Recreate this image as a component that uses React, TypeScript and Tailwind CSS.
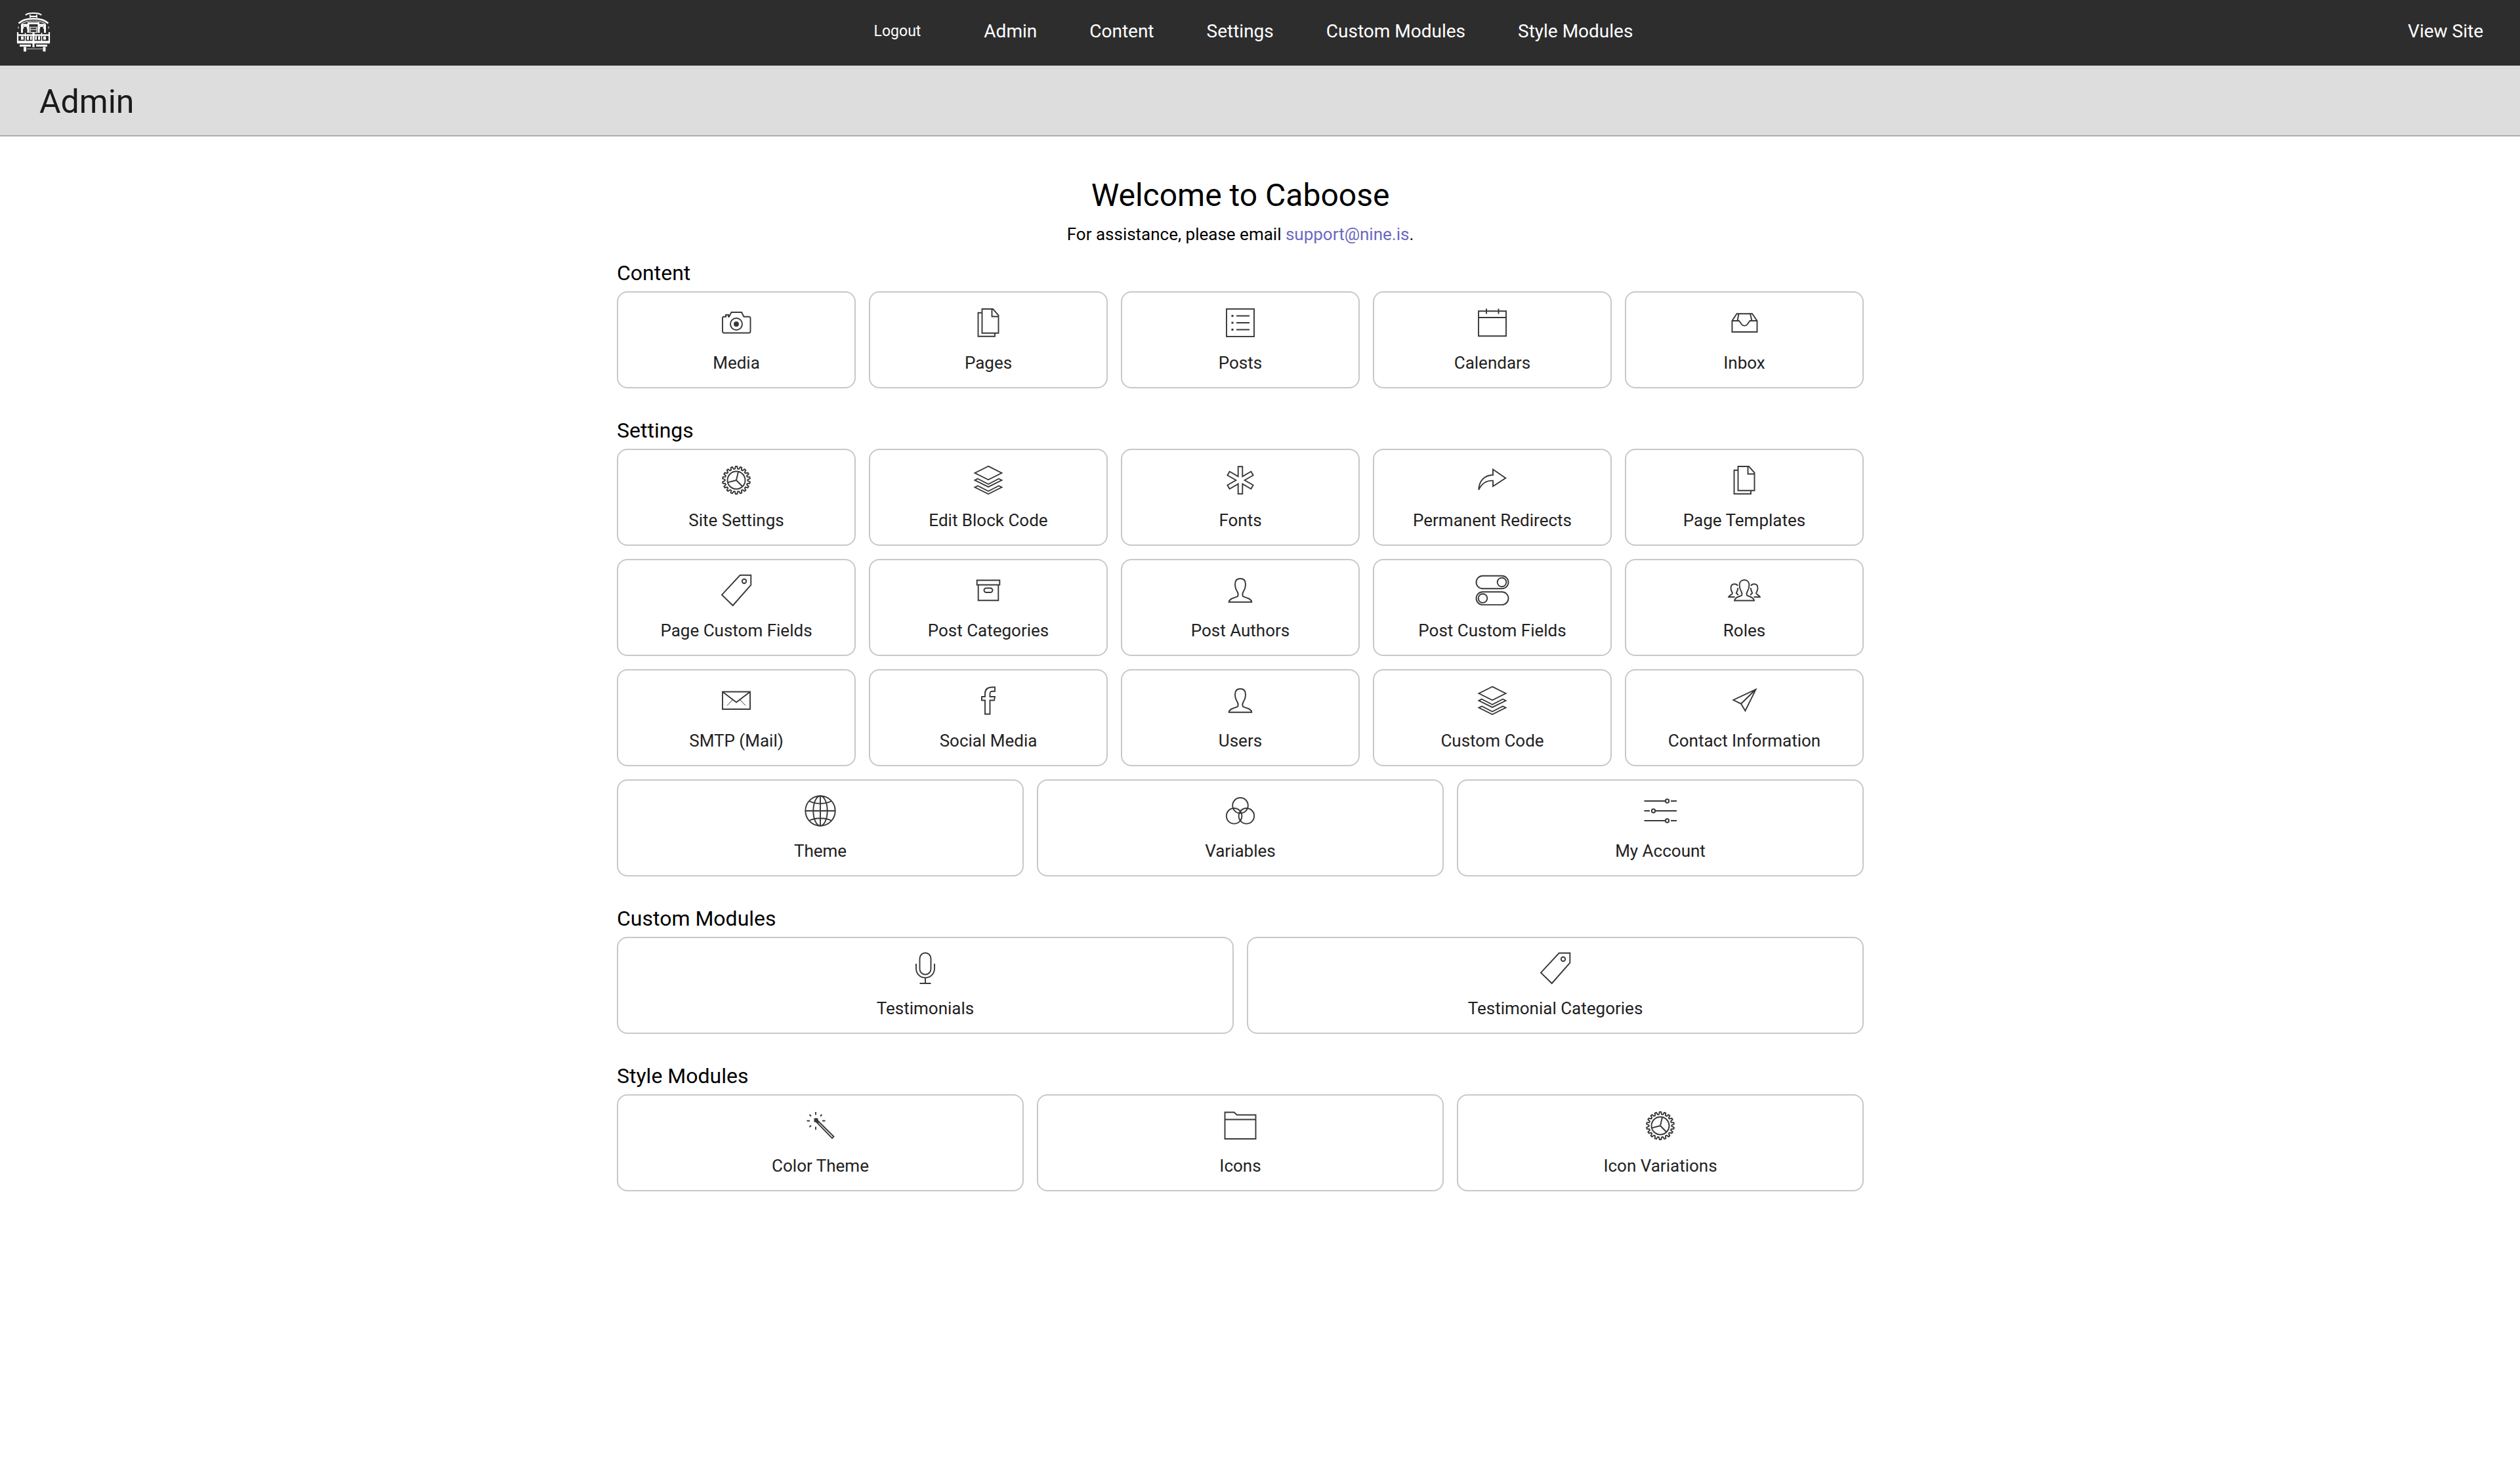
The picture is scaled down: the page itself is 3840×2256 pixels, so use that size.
import type { ReactNode } from "react";

const polar = (radius: number, degrees: number) => {
  const a = (degrees * Math.PI) / 180;
  return `${(24 + radius * Math.cos(a)).toFixed(2)} ${(24 + radius * Math.sin(a)).toFixed(2)}`;
};

const TEETH = 18;
const gearPath =
  "M" +
  Array.from({ length: TEETH }, (_, i) => {
    const a = (i * 360) / TEETH - 90;
    return [polar(17.4, a - 7), polar(21, a - 3.2), polar(21, a + 3.2), polar(17.4, a + 7)].join("L");
  }).join("L") +
  "Z";

const asteriskPath =
  "M" +
  Array.from({ length: 6 }, (_, i) => {
    const a = i * 60 - 90;
    return [polar(21, a - 9), polar(21, a + 9), polar(6.6, a + 30)].join("L");
  }).join("L") +
  "Z";

const gear = (
  <>
    <path d={gearPath} />
    <circle cx="24" cy="24" r="13.5" />
    <path d="M24 24 27 11M24 24 11 27.3M24 24l9.3 9.5" />
  </>
);

const layers = (
  <path d="M24 2.7 44.5 13 24 23.3 3.5 13ZM8 21.7 3.5 24 24 34.2 44.5 24 40 21.7 24 30ZM8 32.5 3.5 34.8 24 45 44.5 34.8 40 32.5 24 40.8Z" />
);

const pages = (
  <path d="M14.5 3H31l8.5 9.5V39.7h-25ZM29.5 3v11.5h10M14.5 8.7h-6v36H34v-5" />
);

const tag = (
  <>
    <path d="M29.7.8H46.3V15.7L18.7 47 2 30.7Z" />
    <circle cx="36" cy="10" r="3.2" />
  </>
);

const user = (
  <path d="M24 6C18.5 6 16 9.5 16 14.5c0 5.500 1.500 8.500 3.500 11.500 1.500 3 1.500 5 .5 7C16 35.500 7.500 35.500 6.700 41.700H41.300C40.500 35.500 32 35.500 28 33c-1-2-1-4 .5-7 2-3 3.500-6 3.500-11.500C32 9.500 29.500 6 24 6Z" />
);

const icons: Record<string, ReactNode> = {
  camera: (
    <>
      <path d="M5 14.700H8V12h4v2.700h1L16.500 8H32l3.500 6.700H43a2.500 2.500 0 0 1 2.500 2.500V37A2.500 2.500 0 0 1 43 39.500H5.500A2.500 2.500 0 0 1 3 37V17A2.300 2.300 0 0 1 5 14.700Z" />
      <circle cx="24" cy="26" r="9" />
      <circle cx="24" cy="26" r="3" fill="currentColor" />
    </>
  ),
  pages,
  list: (
    <>
      <rect x="3" y="3" width="42" height="42" />
      <path d="M18 13.500H38M18 24H38M18 34.500H38" />
      <path d="M10.500 13.500h3M10.500 24h3M10.500 34.500h3" strokeWidth="3" />
    </>
  ),
  calendar: <path d="M3 6.300H45V44.300H3ZM3 16H45M15 2.500v8M33.500 2.500v8" />,
  inbox: (
    <path d="M5.400 21 12.500 10.300H36L43.500 21V38H5.400ZM5.400 21H16L20 26.500C22 29.300 26.500 29.300 28.500 26.500L32.500 21h11M15.500 10.500 13.500 21M33 10.500 35.500 21" />
  ),
  gear,
  layers,
  asterisk: <path d={asteriskPath} />,
  share: <path d="M3.300 38.700C3.500 25 12 16.500 25 16V7.500L44.300 20.800 25 33.300V24.700C16 24.300 8 28.500 3.300 38.700Z" />,
  tag,
  archive: (
    <>
      <path d="M6.700 8.500H41.300v7H6.700ZM8.700 15.500V39.300H39.300V15.500" />
      <rect x="17.500" y="20.500" width="13" height="6.500" rx="3.200" />
    </>
  ),
  user,
  toggles: (
    <>
      <rect x="-.5" y="1.700" width="49" height="19.600" rx="9.800" />
      <circle cx="38.500" cy="11.500" r="6.800" />
      <rect x="-.5" y="26.300" width="49" height="19.600" rx="9.800" />
      <circle cx="9.500" cy="36" r="6.800" />
    </>
  ),
  group: (
    <>
      <path d="M24 8c-5 0-7.400 3.500-7.400 8 0 5 1.400 7.500 2.900 10 1.300 2.500 1.300 4 .5 5.500C16 34 10 33.500 9 39.500H39C38 33.500 32 34 28 31.500c-.8-1.500-.8-3 .5-5.500 1.500-2.500 2.900-5 2.900-10 0-4.500-2.400-8-7.400-8Z" />
      <path d="M13.800 17c-.8-2-2.600-2.700-4.800-2.700-4 0-5.500 2.700-5.500 6.200s1.500 5.500 2.500 7.500c.5 2-4 2.500-5.800 6H9.500M14.300 20c0 3-1.200 5.500-2.500 8l3 3" />
      <path d="M34.200 17c.8-2 2.600-2.700 4.800-2.700 4 0 5.500 2.700 5.500 6.200s-1.500 5.500-2.500 7.500c-.5 2 4 2.500 5.800 6H38.500M33.700 20c0 3 1.200 5.500 2.500 8l-3 3" />
    </>
  ),
  mail: (
    <>
      <path d="M3 10.500H45V37H3Z" />
      <path d="M3 10.500 24 26.500 45 10.500" />
      <path d="M18.500 22.500 10 31.500M29.500 22.500 38 31.500" strokeWidth="1" />
    </>
  ),
  facebook: (
    <path d="M34 3.500H30.500C22 3.500 19 7 19 13v5H14v5.500h5v21h7.500v-21H33L34 18H26.500V13.500c0-3 1-3.800 4-3.800H34Z" />
  ),
  plane: <path d="M41.600 6.800 7.300 23 19 28.800 25.400 39.500ZM19 28.800 41.600 6.800" />,
  globe: (
    <>
      <circle cx="24" cy="24" r="22.700" />
      <ellipse cx="24" cy="24" rx="10.700" ry="22.700" />
      <path d="M24 1.300V46.700M1.300 24H46.700M7 9c9 5 25 5 34 0M7 39c9-5 25-5 34 0" />
    </>
  ),
  venn: (
    <>
      <circle cx="24" cy="15.800" r="11.800" />
      <circle cx="14.600" cy="31.800" r="11.800" />
      <circle cx="33.400" cy="31.800" r="11.800" />
    </>
  ),
  sliders: (
    <>
      <path d="M-.5 9H31.500M37.500 9M40 9h9M-.5 24H8M16.500 24H49M-.5 39H31.500M40 39h9" />
      <circle cx="34.500" cy="9" r="2.700" />
      <circle cx="13.500" cy="24" r="2.700" />
      <circle cx="34.500" cy="39" r="2.700" />
    </>
  ),
  mic: (
    <>
      <rect x="15.500" y=".5" width="17" height="33" rx="8.500" />
      <path d="M10 17v7.500a14 14 0 0 0 28 0V17M24 38.700V47M15.500 47h17" />
    </>
  ),
  wand: (
    <>
      <path d="M17.500 13.800 44.500 40.500 42 43 15.800 16ZM21 20 19 18" />
      <path d="M17 3V7.500M17 25.500V30M3.500 16.500H8M27 16.500h4.500M7.500 7 10 9.500M26.500 7 24 9.500M7.500 26 10 23.500" />
      <path d="M15.500 13.500h4v4h-4z" fill="currentColor" />
    </>
  ),
  folder: <path d="M.5 44V3.500H14.500L19 7.500H47.500V44ZM.5 14.500H47.500" />,
};

type Tile = { icon: string; label: string };
type Section = { title: string; rows: Tile[][] };

const sections: Section[] = [
  {
    title: "Content",
    rows: [
      [
        { icon: "camera", label: "Media" },
        { icon: "pages", label: "Pages" },
        { icon: "list", label: "Posts" },
        { icon: "calendar", label: "Calendars" },
        { icon: "inbox", label: "Inbox" },
      ],
    ],
  },
  {
    title: "Settings",
    rows: [
      [
        { icon: "gear", label: "Site Settings" },
        { icon: "layers", label: "Edit Block Code" },
        { icon: "asterisk", label: "Fonts" },
        { icon: "share", label: "Permanent Redirects" },
        { icon: "pages", label: "Page Templates" },
      ],
      [
        { icon: "tag", label: "Page Custom Fields" },
        { icon: "archive", label: "Post Categories" },
        { icon: "user", label: "Post Authors" },
        { icon: "toggles", label: "Post Custom Fields" },
        { icon: "group", label: "Roles" },
      ],
      [
        { icon: "mail", label: "SMTP (Mail)" },
        { icon: "facebook", label: "Social Media" },
        { icon: "user", label: "Users" },
        { icon: "layers", label: "Custom Code" },
        { icon: "plane", label: "Contact Information" },
      ],
      [
        { icon: "globe", label: "Theme" },
        { icon: "venn", label: "Variables" },
        { icon: "sliders", label: "My Account" },
      ],
    ],
  },
  {
    title: "Custom Modules",
    rows: [
      [
        { icon: "mic", label: "Testimonials" },
        { icon: "tag", label: "Testimonial Categories" },
      ],
    ],
  },
  {
    title: "Style Modules",
    rows: [
      [
        { icon: "wand", label: "Color Theme" },
        { icon: "folder", label: "Icons" },
        { icon: "gear", label: "Icon Variations" },
      ],
    ],
  },
];

const navLinks = ["Admin", "Content", "Settings", "Custom Modules", "Style Modules"];

function Logo() {
  return (
    <svg viewBox="0 0 54 64" className="h-16 w-[54px]" fill="none" stroke="#fff" aria-hidden="true">
      {/* lantern roof */}
      <path d="M15 7C17 4.500 21 4 27 4s10 .5 12 3" strokeWidth="2.200" />
      <path d="M22 6.500v4.500M32 6.500v4.500M21 9h12" strokeWidth="1.800" />
      {/* main roof */}
      <path d="M4.500 19.500C10 14 18 12.500 27 12.500S44 14 49.500 19.500" strokeWidth="2.500" />
      <path d="M9 20C14 17 20 16 27 16s13 1 18 4" strokeWidth="1.500" stroke="#bbb" />
      <path d="M18 19.500h18" strokeWidth="3" />
      {/* body with arched windows */}
      <path d="M9.500 34V22h9.500v12M35 34V22h9.500v12" strokeWidth="3" />
      <path d="M11 28c0-3 1.500-4 3.500-4s3.500 1 3.500 4M36 28c0-3 1.500-4 3.500-4s3.500 1 3.500 4" strokeWidth="1.500" />
      <path d="M22 25.500h10v8H22ZM22 29h10" strokeWidth="1.700" stroke="#ccc" />
      <path d="M4 24.500v3M50 24.500v3" strokeWidth="2" stroke="#999" />
      {/* railing */}
      <path d="M3 33v17M51 33v17" strokeWidth="2.200" />
      <path d="M2 37.500h50" strokeWidth="2.500" />
      <path d="M2 48.200h50" strokeWidth="4" />
      <path d="M27 33v23" strokeWidth="3" />
      <path d="M14.500 34v14M39.500 34v14" strokeWidth="1.500" />
      <path d="M8 42h4M42 42h4" strokeWidth="5" />
      <path d="M17 42h3M22 42h2.500M29.500 42h2.500M34 42h3" strokeWidth="5.500" />
      {/* steps and wheels */}
      <path d="M6 53.500h17M31 53.500h17" strokeWidth="3" />
      <path d="M14 55.500v7M43.500 55.500v7" strokeWidth="4" />
      <path d="M17 58.500h24" strokeWidth="1.500" stroke="#999" />
    </svg>
  );
}

function TileCard({ icon, label }: Tile) {
  return (
    <a
      href="#"
      className="flex min-w-0 flex-1 flex-col items-center rounded-2xl border-2 border-[#c8c8c8] bg-white pt-[22px] pb-[21px] text-[#222222]"
    >
      <svg
        viewBox="0 0 48 48"
        className="size-12 overflow-visible text-[#383838]"
        fill="none"
        stroke="currentColor"
        strokeWidth="1.9"
        aria-hidden="true"
      >
        {icons[icon]}
      </svg>
      <span className="mt-[21px] text-[26px] leading-8">{label}</span>
    </a>
  );
}

export default function App() {
  return (
    <div className="min-h-screen bg-white font-['Roboto',sans-serif] text-black">
      <header className="grid h-[100px] grid-cols-[1fr_auto_1fr] items-center bg-[#2d2d2d] pr-14 pb-1 pl-6 text-[28px] leading-8 text-white">
        <a href="#" aria-label="Caboose home" className="justify-self-start">
          <Logo />
        </a>
        <nav className="flex items-center gap-20 pl-3">
          <button type="button" className="pr-4 text-[23px] leading-8">
            Logout
          </button>
          {navLinks.map((label) => (
            <a key={label} href="#">
              {label}
            </a>
          ))}
        </nav>
        <a href="#" className="justify-self-end">
          View Site
        </a>
      </header>

      <div className="flex h-[108px] items-center border-b-2 border-[#adadad] bg-[#dddddd] px-[60px] pt-1">
        <h1 className="text-[50px] leading-[60px] text-[#1a1a1a]">Admin</h1>
      </div>

      <main className="pr-[60px] pt-[62px] pb-20">
        <div className="mx-auto max-w-[1900px]">
          <h2 className="text-center text-5xl leading-[56px]">Welcome to Caboose</h2>
          <p className="mt-[15px] text-center text-[26px] leading-8">
            For assistance, please email{" "}
            <a href="mailto:support@nine.is" className="text-[#6a6abf]">
              support@nine.is
            </a>
            .
          </p>

          <div className="mt-[25px] flex flex-col gap-[46px]">
            {sections.map((section) => (
              <section key={section.title}>
                <h3 className="mb-[10px] text-[32px] leading-9">{section.title}</h3>
                <div className="flex flex-col gap-5">
                  {section.rows.map((row) => (
                    <div key={row[0].label} className="flex gap-5">
                      {row.map((tile) => (
                        <TileCard key={tile.label} {...tile} />
                      ))}
                    </div>
                  ))}
                </div>
              </section>
            ))}
          </div>
        </div>
      </main>
    </div>
  );
}
